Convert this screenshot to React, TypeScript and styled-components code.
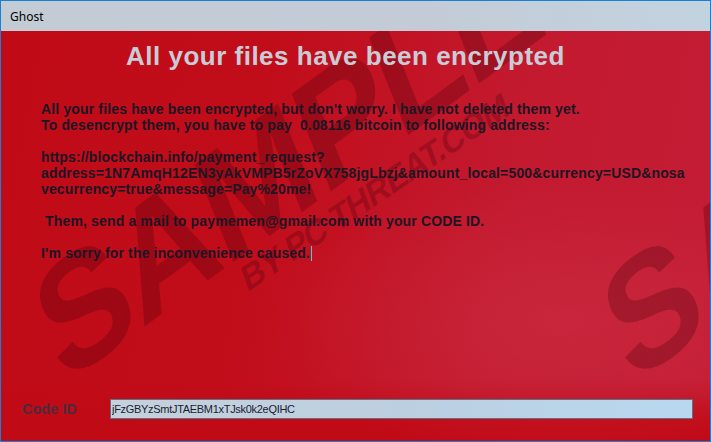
import React from "react";
import styled, { createGlobalStyle } from "styled-components";

const GlobalStyle = createGlobalStyle`
  html, body { margin: 0; padding: 0; background: #ffffff; }
  * { box-sizing: border-box; }
`;

const Window = styled.div`
  width: 711px;
  height: 442px;
  border: 1px solid #1a7fd5;
  display: flex;
  flex-direction: column;
  overflow: hidden;
`;

const TitleBar = styled.div`
  height: 30px;
  flex: none;
  display: flex;
  align-items: center;
  padding-left: 9px;
  background: linear-gradient(90deg, #c3cbd5 0%, #c3ccd6 60%, #c2d3e0 100%);
  font-family: "Noto Sans", "Open Sans", sans-serif;
  font-size: 12px;
  color: #000;
`;

const Body = styled.div`
  flex: 1;
  position: relative;
  overflow: hidden;
  display: flex;
  flex-direction: column;
  background:
    radial-gradient(ellipse 420px 200px at 560px 290px, rgba(210, 60, 80, 0.35), rgba(210, 60, 80, 0) 70%),
    linear-gradient(180deg, rgba(192, 12, 24, 0) 0%, rgba(192, 12, 24, 0) 85%, rgba(192, 10, 22, 0.9) 95%, #c00b17 100%),
    linear-gradient(100deg, #c00b17 0%, #c10d1a 35%, #c31a30 70%, #c31c34 100%);
`;

const WatermarkLayer = styled.div`
  position: absolute;
  inset: 0;
  pointer-events: none;
  overflow: hidden;
`;

const Stamp = styled.div<{ $x: number; $y: number; $size: number; $angle: number; $spacing: number }>`
  position: absolute;
  left: ${(p) => p.$x}px;
  top: ${(p) => p.$y}px;
  transform-origin: 0 100%;
  transform: rotate(${(p) => p.$angle}deg) skewX(-14deg);
  font-family: "Liberation Sans", Arial, sans-serif;
  font-weight: 900;
  font-size: ${(p) => p.$size}px;
  line-height: 1;
  white-space: nowrap;
  color: rgba(70, 0, 12, 0.28);
  letter-spacing: ${(p) => p.$spacing}px;
`;

const Content = styled.div`
  position: relative;
  display: flex;
  flex-direction: column;
  flex: 1;
`;

const Heading = styled.h1`
  margin: 10px 0 0 0;
  padding-left: 125px;
  font-family: "Liberation Sans", Arial, sans-serif;
  font-weight: 700;
  font-size: 26px;
  letter-spacing: 0.5px;
  line-height: 30px;
  color: #c9ccd6;
`;

const Message = styled.div`
  margin-top: 30px;
  padding-left: 40px;
  font-family: "Liberation Sans", Arial, sans-serif;
  font-weight: 700;
  font-size: 14px;
  letter-spacing: 0.15px;
  line-height: 16px;
  color: #1c1624;
  white-space: pre-wrap;
`;

const Caret = styled.span`
  display: inline-block;
  width: 1px;
  height: 15px;
  margin-left: 1px;
  vertical-align: -3px;
  background: #3fd0e0;
`;

const Footer = styled.div`
  margin-top: auto;
  margin-bottom: 22px;
  display: flex;
  align-items: center;
  padding-left: 21px;
`;

const Label = styled.span`
  width: 88px;
  font-family: "Liberation Sans", Arial, sans-serif;
  font-weight: 700;
  font-size: 14.5px;
  color: #4a2c3a;
`;

const CodeInput = styled.input`
  width: 583px;
  height: 20px;
  border: 1px solid #5c7286;
  padding: 0 0 0 1px;
  margin: 0;
  background: linear-gradient(90deg, #c5d1dc 0%, #bccfe0 50%, #b8d8ef 100%);
  font-family: "Liberation Sans", Arial, sans-serif;
  font-size: 11px;
  letter-spacing: -0.3px;
  color: #1a2030;
  outline: none;
`;

const messageLines = `All your files have been encrypted, but don't worry. I have not deleted them yet.
To desencrypt them, you have to pay  0.08116 bitcoin to following address:

https://blockchain.info/payment_request?
address=1N7AmqH12EN3yAkVMPB5rZoVX758jgLbzj&amount_local=500&currency=USD&nosa
vecurrency=true&message=Pay%20me!

 Them, send a mail to paymemen@gmail.com with your CODE ID.

I'm sorry for the inconvenience caused.`;

export default function App() {
  return (
    <>
      <GlobalStyle />
      <Window>
        <TitleBar>Ghost</TitleBar>
        <Body>
          <WatermarkLayer>
            <Stamp $x={72} $y={228} $size={148} $angle={-36} $spacing={-3}>SAMPLE</Stamp>
            <Stamp $x={640} $y={228} $size={148} $angle={-36} $spacing={-3}>SAMPLE</Stamp>
            <Stamp $x={248} $y={232} $size={34} $angle={-34} $spacing={-1}>BY PC THREAT.COM</Stamp>
          </WatermarkLayer>
          <Content>
            <Heading>All your files have been encrypted</Heading>
            <Message>
              {messageLines}
              <Caret />
            </Message>
            <Footer>
              <Label>Code ID</Label>
              <CodeInput readOnly value="jFzGBYzSmtJTAEBM1xTJsk0k2eQIHC" />
            </Footer>
          </Content>
        </Body>
      </Window>
    </>
  );
}
